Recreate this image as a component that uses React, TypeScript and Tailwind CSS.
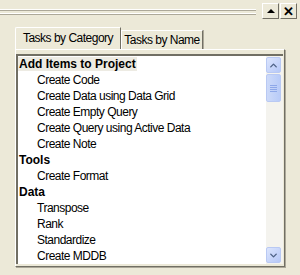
import { ChevronUp, ChevronDown } from "lucide-react"

const rows: { label: string; header?: boolean }[] = [
  { label: "Add Items to Project", header: true },
  { label: "Create Code" },
  { label: "Create Data using Data Grid" },
  { label: "Create Empty Query" },
  { label: "Create Query using Active Data" },
  { label: "Create Note" },
  { label: "Tools", header: true },
  { label: "Create Format" },
  { label: "Data", header: true },
  { label: "Transpose" },
  { label: "Rank" },
  { label: "Standardize" },
  { label: "Create MDDB" },
]

function GripLine() {
  return (
    <div className="flex flex-col">
      <div className="h-px bg-white" />
      <div className="h-px bg-[#aca899]" />
    </div>
  )
}

function ScrollButton({ up }: { up?: boolean }) {
  return (
    <div className="flex h-[16px] w-[15px] items-center justify-center rounded-[2px] border border-[#b9c9f3] bg-gradient-to-br from-[#dce5fd] to-[#b6c8f7] text-[#4d6185]">
      {up ? <ChevronUp size={11} strokeWidth={3} /> : <ChevronDown size={11} strokeWidth={3} />}
    </div>
  )
}

export default function App() {
  return (
    <div
      className="relative h-[275px] w-[300px] overflow-hidden bg-[#ece9d8] text-[12px] text-black"
      style={{ fontFamily: '"Liberation Sans", Arial, sans-serif' }}
    >
      <div className="flex h-[26px] items-start">
        <div className="mt-[9px] flex flex-1 flex-col gap-[2px]">
          <GripLine />
          <GripLine />
        </div>
        <div className="ml-[6px] mr-[3px] mt-[3px] flex gap-[1px]">
          <div className="flex h-[16px] w-[17px] items-center justify-center border border-b-[#716f64] border-l-white border-r-[#716f64] border-t-white bg-[#ece9d8]">
            <div className="h-0 w-0 border-x-[4px] border-b-[4px] border-x-transparent border-b-black" />
          </div>
          <div className="flex h-[16px] w-[17px] items-center justify-center border border-b-[#716f64] border-l-white border-r-[#716f64] border-t-white bg-[#ece9d8] text-[13px] font-bold leading-none">
            ✕
          </div>
        </div>
      </div>

      <div className="ml-[15px] flex h-[23px] items-end whitespace-nowrap tracking-[-0.5px]">
        <div className="relative z-10 flex h-[22px] w-[106px] items-center justify-center rounded-tl-[2px] border-l border-t border-l-white border-t-white border-r border-r-[#716f64] bg-[#ece9d8] pb-[2px]">
          Tasks by Category
        </div>
        <div className="flex h-[19px] w-[82px] items-center justify-center border-l border-r border-t border-l-white border-r-[#716f64] border-t-white bg-[#ece9d8] shadow-[1px_0_0_#aca899]">
          Tasks by Name
        </div>
      </div>

      <div className="ml-[15px] h-[218px] w-[270px] border-l border-t border-l-white border-t-white border-r border-b border-r-[#716f64] border-b-[#716f64] pr-px pt-[4px] shadow-[1px_1px_0_#aca899]">
        <div className="flex h-[210px] border-l-2 border-t-2 border-l-[#716f64] border-t-[#716f64] bg-white">
          <div className="flex-1 whitespace-nowrap">
            {rows.map((r) =>
              r.header ? (
                <div key={r.label} className="flex h-[16px] items-center">
                  <span
                    className={`px-px font-bold leading-[14px] ${
                      r.label === "Add Items to Project" ? "bg-[#edebe3]" : ""
                    }`}
                  >
                    {r.label}
                  </span>
                </div>
              ) : (
                <div key={r.label} className="flex h-[16px] items-center pl-[19px] tracking-[-0.5px]">
                  {r.label}
                </div>
              ),
            )}
          </div>
          <div className="flex w-[16px] flex-col bg-[#f4f3ee] pb-px pt-px">
            <ScrollButton up />
            <div className="mt-px flex h-[28px] w-[15px] flex-col items-center justify-center gap-[1px] rounded-[2px] border border-[#b9c9f3] bg-gradient-to-r from-[#cddaf9] to-[#b8cbf8]">
              <div className="h-px w-[7px] bg-[#8ea8e9]" />
              <div className="h-px w-[7px] bg-[#8ea8e9]" />
              <div className="h-px w-[7px] bg-[#8ea8e9]" />
              <div className="h-px w-[7px] bg-[#8ea8e9]" />
            </div>
            <div className="flex-1" />
            <ScrollButton />
          </div>
          <div className="w-px bg-[#f4f3ee]" />
        </div>
      </div>
    </div>
  )
}
